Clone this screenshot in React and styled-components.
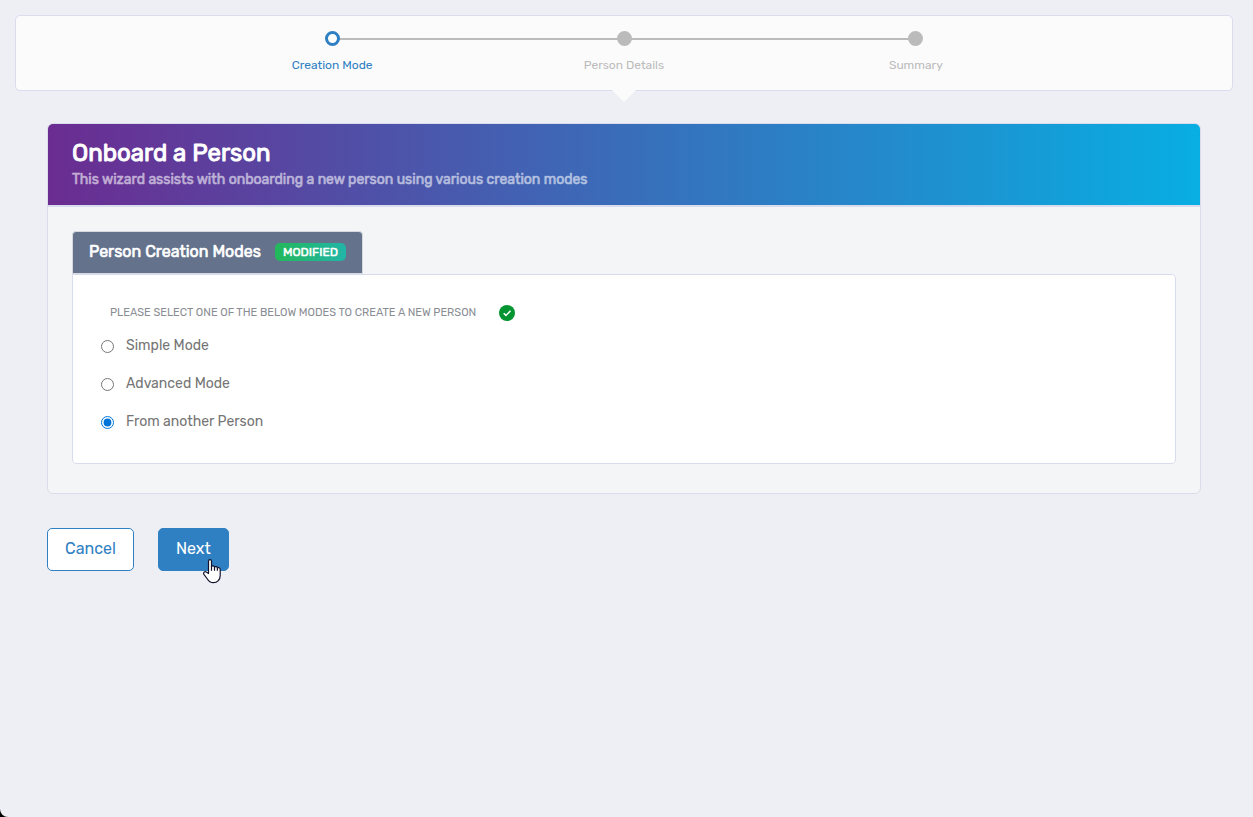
import { useState } from 'react';
import styled, { createGlobalStyle, css } from 'styled-components';

const GlobalStyle = createGlobalStyle`
  * {
    box-sizing: border-box;
  }

  html {
    background: #000;
  }

  body {
    margin: 0;
    font-family: Rubik, Roboto, 'Liberation Sans', sans-serif;
    color: #757575;
  }
`;

// regular letterforms with a thicker stroke, keeps the regular widths
const strong = css`
  font-weight: 400;
  -webkit-text-stroke: 0.04em currentColor;
`;

const Page = styled.div`
  min-height: 100vh;
  padding: 15px 20px 15px 15px;
  background: #eeeff4;
  border-bottom-left-radius: 8px;
`;

const StepperCard = styled.nav`
  position: relative;
  padding: 15px 0 16px;
  background: #fbfbfb;
  border: 1px solid #d9dcec;
  border-radius: 5px;

  &::after {
    content: '';
    position: absolute;
    top: 100%;
    left: calc(50% - 12px);
    border: 12px solid transparent;
    border-top-color: #fbfbfb;
    border-bottom: 0;
  }
`;

const Steps = styled.ol`
  display: flex;
  width: 72%;
  margin: 0 auto;
  padding: 0;
  list-style: none;
`;

const Step = styled.li`
  position: relative;
  flex: 1;
  display: flex;
  flex-direction: column;
  align-items: center;
  gap: 10px;
  font-size: 12px;
  line-height: 18px;
  color: ${({ $active }) => ($active ? '#2f80c3' : '#bbb')};

  &:not(:last-child)::after {
    content: '';
    position: absolute;
    top: 7px;
    left: 50%;
    width: 100%;
    height: 2px;
    background: #bbb;
  }
`;

const Dot = styled.span`
  position: relative;
  z-index: 1;
  width: 15px;
  height: 15px;
  border: 3px solid currentColor;
  border-radius: 50%;
  background: ${({ $active }) => ($active ? '#fff' : 'currentColor')};
`;

const Content = styled.main`
  padding: 32px;
`;

const Panel = styled.section`
  background: #f4f5f7;
  border: 1px solid #d9dcec;
  border-radius: 6px;
  overflow: hidden;
`;

const PanelHeader = styled.header`
  padding: 14px 24px 13px;
  background: linear-gradient(90deg, #6b2c91, #08aee2);
  background-clip: padding-box;
  border-bottom: 2px solid #d9dcec;
`;

const Title = styled.h1`
  ${strong}
  margin: 0;
  font-size: 24px;
  line-height: 30px;
  color: #fff;
`;

const Subtitle = styled.p`
  ${strong}
  margin: 0;
  font-size: 14px;
  line-height: 24px;
  color: #fff;
  opacity: 0.6;
`;

const PanelBody = styled.div`
  display: flex;
  flex-direction: column;
  align-items: flex-start;
  padding: 24px 24px 29px;
`;

const Tab = styled.div`
  display: flex;
  align-items: center;
  gap: 14px;
  height: 43px;
  padding: 0 16px 2px;
  background: #64728c;
  border: 1px solid #d6d9e0;
  border-radius: 4px 4px 0 0;
`;

const TabTitle = styled.h2`
  ${strong}
  margin: 0;
  font-size: 16px;
  line-height: 24px;
  color: #fff;
`;

const Badge = styled.span`
  ${strong}
  padding: 0 8px;
  font-size: 12px;
  line-height: 18px;
  color: #fff;
  background: linear-gradient(90deg, #22b859, #22b5a8);
  border-radius: 5px;
`;

const ModeBox = styled.fieldset`
  align-self: stretch;
  min-width: 0;
  margin: 0;
  padding: 28px 28px 29px;
  background: #fff;
  border: 1px solid #d9dcec;
  border-radius: 0 4px 4px 4px;
`;

const Prompt = styled.div`
  display: flex;
  align-items: center;
  gap: 23px;
  padding-left: 9px;
  font-size: 11px;
  line-height: 20px;
  text-transform: uppercase;
  color: #8a8d93;
`;

const Option = styled.label`
  display: flex;
  align-items: center;
  gap: 12px;
  width: fit-content;
  margin-top: 14px;
  font-size: 14px;
  line-height: 24px;
  cursor: pointer;

  ${Prompt} + & {
    margin-top: 11px;
  }
`;

const Radio = styled.input`
  width: 13px;
  height: 13px;
  margin: 0;
  accent-color: #0075d9;
`;

const Actions = styled.div`
  display: flex;
  gap: 24px;
  margin-top: 34px;
`;

const Button = styled.button`
  position: relative;
  height: 43px;
  padding: 0 17px 2px;
  font-family: inherit;
  font-size: 16px;
  border: 1px solid #2f80c3;
  border-radius: 5px;
  color: ${({ $primary }) => ($primary ? '#fff' : '#2f80c3')};
  background: ${({ $primary }) => ($primary ? '#2f80c3' : '#fff')};
  cursor: pointer;
`;

const Pointer = styled.svg`
  position: absolute;
  right: 7px;
  bottom: -14px;
`;

const steps = ['Creation Mode', 'Person Details', 'Summary'];
const modes = ['Simple Mode', 'Advanced Mode', 'From another Person'];

function CheckIcon() {
  return (
    <svg width="16" height="16" viewBox="0 0 16 16" aria-hidden="true">
      <circle cx="8" cy="8" r="8" fill="#049432" />
      <path d="M4.7 8.2l2.3 2.2 4.5-4.7" fill="none" stroke="#fff" strokeWidth="1.5" />
    </svg>
  );
}

function HandPointer() {
  return (
    <Pointer width="18" height="25" viewBox="0 0 18 25" aria-hidden="true">
      <path
        d="M5.5 14.5V2.2c0-2 3-2 3 0v5.2c.6-.9 2.8-.7 3 .6.8-.7 2.7-.4 2.9.8.9-.6 2.8-.1 2.8 1.4v6.3c0 4.2-2.8 7.2-6.8 7.2-3 0-4.6-1.2-6-3.7L.9 15.3c-.9-1.8.8-3.2 2.3-2.2z"
        fill="#fff"
        stroke="#12122a"
        strokeWidth="1.2"
        strokeLinejoin="round"
      />
      <path d="M8.5 7v4.7M11.5 8v3.7M14.4 9v2.7" fill="none" stroke="#12122a" strokeWidth="1.2" />
    </Pointer>
  );
}

export default function App() {
  const [mode, setMode] = useState('From another Person');

  return (
    <Page>
      <GlobalStyle />
      <StepperCard>
        <Steps>
          {steps.map((step, i) => (
            <Step key={step} $active={i === 0}>
              <Dot $active={i === 0} />
              {step}
            </Step>
          ))}
        </Steps>
      </StepperCard>

      <Content>
        <Panel>
          <PanelHeader>
            <Title>Onboard a Person</Title>
            <Subtitle>This wizard assists with onboarding a new person using various creation modes</Subtitle>
          </PanelHeader>
          <PanelBody>
            <Tab>
              <TabTitle>Person Creation Modes</TabTitle>
              <Badge>MODIFIED</Badge>
            </Tab>
            <ModeBox aria-labelledby="mode-prompt">
              <Prompt>
                <span id="mode-prompt">Please select one of the below modes to create a new person</span>
                <CheckIcon />
              </Prompt>
              {modes.map((name) => (
                <Option key={name}>
                  <Radio
                    type="radio"
                    name="mode"
                    value={name}
                    checked={mode === name}
                    onChange={() => setMode(name)}
                  />
                  {name}
                </Option>
              ))}
            </ModeBox>
          </PanelBody>
        </Panel>

        <Actions>
          <Button type="button">Cancel</Button>
          <Button type="button" $primary>
            Next
            <HandPointer />
          </Button>
        </Actions>
      </Content>
    </Page>
  );
}
